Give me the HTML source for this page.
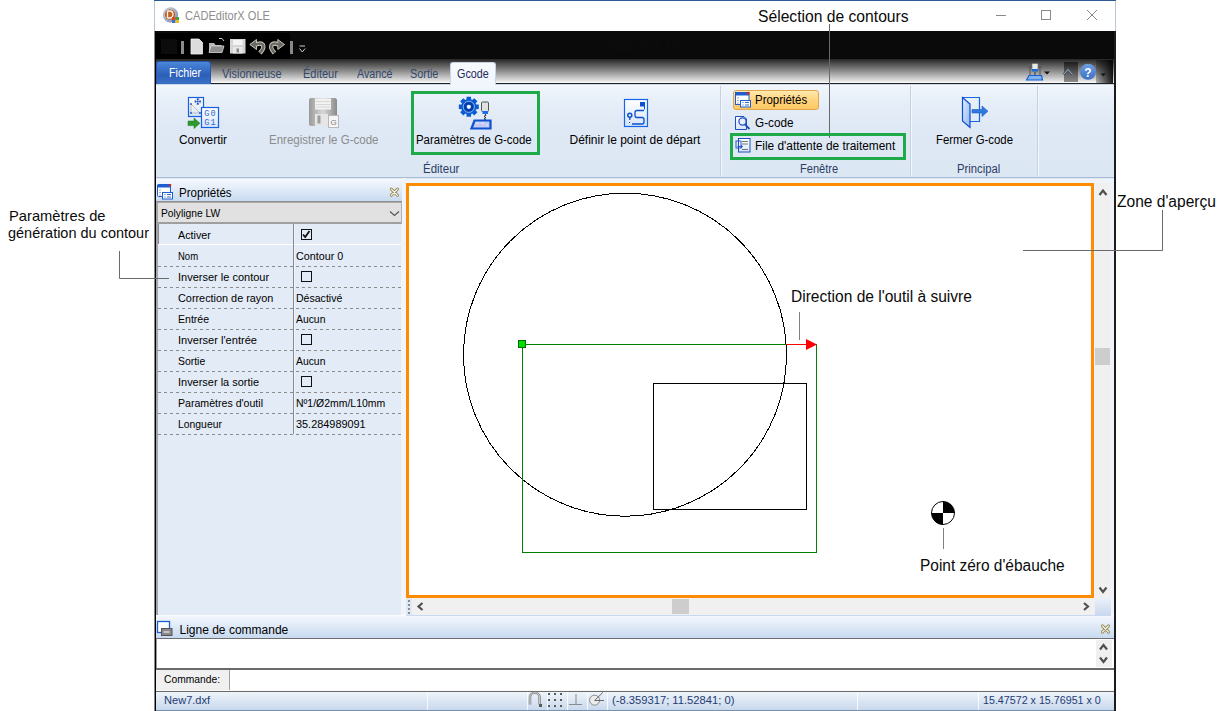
<!DOCTYPE html>
<html><head><meta charset="utf-8"><style>
html,body{margin:0;padding:0;}
body{width:1219px;height:711px;position:relative;overflow:hidden;background:#fff;font-family:"Liberation Sans",sans-serif;}
.t{position:absolute;white-space:nowrap;transform-origin:0 0;}
.r{position:absolute;}
</style></head><body>
<div class="r" style="left:154px;top:0px;width:962px;height:711px;background:#fff"></div>
<div class="r" style="left:154px;top:0px;width:962px;height:1px;background:#2b5b92"></div>
<div class="r" style="left:154px;top:1px;width:1px;height:30px;background:#b9c6d6"></div>
<div class="r" style="left:1115px;top:1px;width:1px;height:30px;background:#b9c6d6"></div>
<div class="r" style="left:156px;top:31px;width:958px;height:28px;background:#0a0a0a"></div>
<div class="r" style="left:156px;top:33px;width:134px;height:26px;background:#000"></div>
<div class="r" style="left:161px;top:39px;width:16px;height:15px;background:#0c0c0c"></div>
<div class="r" style="left:156px;top:59px;width:958px;height:23px;background:linear-gradient(#262626,#ececec)"></div>
<div class="r" style="left:156px;top:82px;width:958px;height:1px;background:#fafafa"></div>
<div class="r" style="left:156px;top:83px;width:958px;height:1px;background:#1f1f1f"></div>
<div class="r" style="left:154px;top:31px;width:1px;height:680px;background:#8a8a8a"></div>
<div class="r" style="left:155px;top:31px;width:1px;height:680px;background:#000"></div>
<div class="r" style="left:1114px;top:31px;width:2px;height:680px;background:#1c1c1c"></div>
<div class="r" style="left:156px;top:84px;width:958px;height:93px;background:linear-gradient(#f3f7fd 0%,#e6eef8 20%,#dfe9f5 45%,#dce7f4 100%)"></div>
<div class="r" style="left:156px;top:84px;width:958px;height:1px;background:#c9d7e8"></div>
<div class="r" style="left:156px;top:177px;width:958px;height:1px;background:#a9bbd2"></div>
<div class="r" style="left:720px;top:86px;width:1px;height:90px;background:#c3d1e2"></div>
<div class="r" style="left:721px;top:86px;width:1px;height:90px;background:#f4f8fc"></div>
<div class="r" style="left:910px;top:86px;width:1px;height:90px;background:#c3d1e2"></div>
<div class="r" style="left:911px;top:86px;width:1px;height:90px;background:#f4f8fc"></div>
<div class="r" style="left:1037px;top:86px;width:1px;height:90px;background:#c3d1e2"></div>
<div class="r" style="left:1038px;top:86px;width:1px;height:90px;background:#f4f8fc"></div>
<div class="r" style="left:156px;top:178px;width:958px;height:437px;background:#eff4fa"></div>
<div class="r" style="left:156px;top:178px;width:958px;height:1px;background:#dfe8f4"></div>
<div class="r" style="left:156px;top:178px;width:247px;height:1px;background:#dfe8f4"></div>
<div class="r" style="left:156px;top:179px;width:247px;height:22px;background:linear-gradient(#f6f9fe,#c9dbf1)"></div>
<div class="r" style="left:156px;top:201px;width:246px;height:1px;background:#8f8f8f"></div>
<div class="r" style="left:156px;top:202px;width:246px;height:22px;background:#e1e1e1;border-top:1px solid #a9a9a9;box-sizing:border-box"></div>
<div class="r" style="left:156px;top:222px;width:246px;height:2px;background:#9f9f9f"></div>
<div class="r" style="left:401px;top:202px;width:1px;height:22px;background:#b0b0b0"></div>
<div class="r" style="left:156px;top:224px;width:245px;height:391px;background:#e2ebf6"></div>
<div class="r" style="left:156px;top:202px;width:2px;height:413px;background:#a6a6a6"></div>
<div class="r" style="left:158px;top:224px;width:1px;height:21px;background:#8a8a8a"></div>
<div class="r" style="left:158px;top:244px;width:243px;height:1px;background:#ffffff"></div>
<div class="r" style="left:158px;top:266px;width:243px;height:1px;background:repeating-linear-gradient(90deg,#8c8c8c 0 3px,transparent 3px 6px)"></div>
<div class="r" style="left:158px;top:287px;width:243px;height:1px;background:repeating-linear-gradient(90deg,#8c8c8c 0 3px,transparent 3px 6px)"></div>
<div class="r" style="left:158px;top:308px;width:243px;height:1px;background:repeating-linear-gradient(90deg,#8c8c8c 0 3px,transparent 3px 6px)"></div>
<div class="r" style="left:158px;top:329px;width:243px;height:1px;background:repeating-linear-gradient(90deg,#8c8c8c 0 3px,transparent 3px 6px)"></div>
<div class="r" style="left:158px;top:350px;width:243px;height:1px;background:repeating-linear-gradient(90deg,#8c8c8c 0 3px,transparent 3px 6px)"></div>
<div class="r" style="left:158px;top:371px;width:243px;height:1px;background:repeating-linear-gradient(90deg,#8c8c8c 0 3px,transparent 3px 6px)"></div>
<div class="r" style="left:158px;top:392px;width:243px;height:1px;background:repeating-linear-gradient(90deg,#8c8c8c 0 3px,transparent 3px 6px)"></div>
<div class="r" style="left:158px;top:413px;width:243px;height:1px;background:repeating-linear-gradient(90deg,#8c8c8c 0 3px,transparent 3px 6px)"></div>
<div class="r" style="left:158px;top:434px;width:243px;height:1px;background:repeating-linear-gradient(90deg,#8c8c8c 0 3px,transparent 3px 6px)"></div>
<div class="r" style="left:293px;top:224px;width:1px;height:210px;background:#8a8a8a"></div>
<div class="r" style="left:294px;top:224px;width:1px;height:210px;background:#eef3fa"></div>
<div class="r" style="left:402px;top:178px;width:4px;height:437px;background:#f1f5fb"></div>
<div class="r" style="left:406px;top:183px;width:688px;height:415px;background:#fff;border:3px solid #ff8c00;box-sizing:border-box"></div>
<div class="r" style="left:1095px;top:183px;width:16px;height:415px;background:#f0f0f0"></div>
<div class="r" style="left:412px;top:598px;width:683px;height:17px;background:#f0f0f0"></div>
<div class="r" style="left:406px;top:598px;width:6px;height:17px;background:#dfe8f4"></div>
<div class="r" style="left:1095px;top:598px;width:16px;height:17px;background:linear-gradient(#eaf1fa,#c9d9ee)"></div>
<div class="r" style="left:156px;top:615px;width:958px;height:1px;background:#fafcff"></div>
<div class="r" style="left:156px;top:616px;width:958px;height:22px;background:linear-gradient(#f3f7fd,#c8daf0)"></div>
<div class="r" style="left:156px;top:638px;width:958px;height:1px;background:#6f6f6f"></div>
<div class="r" style="left:156px;top:639px;width:958px;height:29px;background:#fff"></div>
<div class="r" style="left:156px;top:639px;width:1px;height:29px;background:#9a9a9a"></div>
<div class="r" style="left:1096px;top:640px;width:16px;height:27px;background:#f0f0f0"></div>
<div class="r" style="left:156px;top:668px;width:958px;height:2px;background:#6a6a6a"></div>
<div class="r" style="left:156px;top:670px;width:958px;height:21px;background:#fff"></div>
<div class="r" style="left:156px;top:670px;width:73px;height:21px;background:#f0f0f0"></div>
<div class="r" style="left:229px;top:670px;width:1px;height:21px;background:#a0a0a0"></div>
<div class="r" style="left:156px;top:690px;width:958px;height:1px;background:#faf8f5"></div>
<div class="r" style="left:156px;top:691px;width:958px;height:1px;background:#6a6a6a"></div>
<div class="r" style="left:156px;top:692px;width:958px;height:18px;background:linear-gradient(#eef4fb,#c8d8ec)"></div>
<div class="r" style="left:156px;top:710px;width:958px;height:1px;background:#7a8fa8"></div>
<div class="r" style="left:427px;top:692px;width:1px;height:18px;background:#ffffff;opacity:.8"></div>
<div class="r" style="left:527px;top:692px;width:1px;height:18px;background:#ffffff;opacity:.8"></div>
<div class="r" style="left:547px;top:692px;width:1px;height:18px;background:#ffffff;opacity:.8"></div>
<div class="r" style="left:567px;top:692px;width:1px;height:18px;background:#ffffff;opacity:.8"></div>
<div class="r" style="left:587px;top:692px;width:1px;height:18px;background:#ffffff;opacity:.8"></div>
<div class="r" style="left:607px;top:692px;width:1px;height:18px;background:#ffffff;opacity:.8"></div>
<div class="r" style="left:857px;top:692px;width:1px;height:18px;background:#ffffff;opacity:.8"></div>
<div class="r" style="left:978px;top:692px;width:1px;height:18px;background:#ffffff;opacity:.8"></div>
<div class="r" style="left:1064px;top:62px;width:14px;height:20px;background:linear-gradient(#1c1c1c,#8c8c8c)"></div>
<div class="r" style="left:1096px;top:60px;width:17px;height:23px;background:linear-gradient(90deg,rgba(0,0,0,.25),rgba(0,0,0,.9))"></div>
<div class="r" style="left:156px;top:61px;width:55px;height:23px;background:linear-gradient(#4a86da,#2c5fb8 60%,#3a72c8);border:1px solid #2a55a8;border-bottom:none;border-radius:3px 3px 0 0;box-sizing:border-box"></div>
<div class="r" style="left:450px;top:62px;width:46px;height:23px;background:linear-gradient(#f6f9fe,#f2f6fc);border:1px solid #c5d3e6;border-bottom:none;border-radius:3px 3px 0 0;box-sizing:border-box"></div>
<div class="r" style="left:733px;top:90px;width:86px;height:20px;background:linear-gradient(#ffe9ae,#ffd47e 50%,#ffc862);border:1px solid #dfa64e;border-radius:3px;box-sizing:border-box"></div>
<div class="t" style="left:184.60px;top:10px;font-size:12px;line-height:12px;color:#8d8d8d;transform:scaleX(0.9233);">CADEditorX OLE</div>
<div class="t" style="left:168.70px;top:67px;font-size:12px;line-height:12px;color:#fff;transform:scaleX(0.8889);">Fichier</div>
<div class="t" style="left:222.40px;top:68px;font-size:12px;line-height:12px;color:#33476b;transform:scaleX(0.9143);">Visionneuse</div>
<div class="t" style="left:302.50px;top:68px;font-size:12px;line-height:12px;color:#33476b;transform:scaleX(0.9184);">Éditeur</div>
<div class="t" style="left:356.50px;top:68px;font-size:12px;line-height:12px;color:#33476b;transform:scaleX(0.8917);">Avancé</div>
<div class="t" style="left:410.00px;top:68px;font-size:12px;line-height:12px;color:#33476b;transform:scaleX(0.9052);">Sortie</div>
<div class="t" style="left:456.70px;top:68px;font-size:12px;line-height:12px;color:#1e2a5a;transform:scaleX(0.8989);">Gcode</div>
<div class="t" style="left:179.00px;top:134px;font-size:12px;line-height:12px;color:#000000;transform:scaleX(0.9859);">Convertir</div>
<div class="t" style="left:268.50px;top:134px;font-size:12px;line-height:12px;color:#8c8c8c;transform:scaleX(0.9600);">Enregistrer le G-code</div>
<div class="t" style="left:416.40px;top:134px;font-size:12px;line-height:12px;color:#000000;transform:scaleX(0.9524);">Paramètres de G-code</div>
<div class="t" style="left:569.50px;top:134px;font-size:12px;line-height:12px;color:#000000;">Définir le point de départ</div>
<div class="t" style="left:936.00px;top:134px;font-size:12px;line-height:12px;color:#000000;transform:scaleX(0.9462);">Fermer G-code</div>
<div class="t" style="left:754.50px;top:94px;font-size:12px;line-height:12px;color:#000000;transform:scaleX(0.9527);">Propriétés</div>
<div class="t" style="left:754.50px;top:117px;font-size:12px;line-height:12px;color:#000000;transform:scaleX(0.9778);">G-code</div>
<div class="t" style="left:754.50px;top:140px;font-size:12px;line-height:12px;color:#000000;transform:scaleX(0.9895);">File d'attente de traitement</div>
<div class="t" style="left:423.40px;top:163px;font-size:12px;line-height:12px;color:#2c3d63;transform:scaleX(0.9579);">Éditeur</div>
<div class="t" style="left:800.40px;top:163px;font-size:12px;line-height:12px;color:#2c3d63;transform:scaleX(0.9208);">Fenêtre</div>
<div class="t" style="left:956.50px;top:163px;font-size:12px;line-height:12px;color:#2c3d63;transform:scaleX(0.9391);">Principal</div>
<div class="t" style="left:179.00px;top:187px;font-size:12px;line-height:12px;color:#000000;transform:scaleX(0.9618);">Propriétés</div>
<div class="t" style="left:160.60px;top:208px;font-size:11px;line-height:11px;color:#000000;transform:scaleX(0.9341);">Polyligne LW</div>
<div class="t" style="left:178.00px;top:230px;font-size:11px;line-height:11px;color:#000000;transform:scaleX(0.9755);">Activer</div>
<div class="r" style="left:301px;top:229px;width:11px;height:11px;border:1px solid #111;box-sizing:border-box"></div>
<div class="t" style="left:178.00px;top:251px;font-size:11px;line-height:11px;color:#000000;transform:scaleX(0.8645);">Nom</div>
<div class="t" style="left:296.00px;top:251px;font-size:11px;line-height:11px;color:#000000;transform:scaleX(0.9770);">Contour 0</div>
<div class="t" style="left:178.00px;top:272px;font-size:11px;line-height:11px;color:#000000;">Inverser le contour</div>
<div class="r" style="left:301px;top:271px;width:11px;height:11px;border:1px solid #111;box-sizing:border-box"></div>
<div class="t" style="left:178.00px;top:293px;font-size:11px;line-height:11px;color:#000000;transform:scaleX(0.9873);">Correction de rayon</div>
<div class="t" style="left:296.00px;top:293px;font-size:11px;line-height:11px;color:#000000;transform:scaleX(0.9583);">Désactivé</div>
<div class="t" style="left:178.00px;top:314px;font-size:11px;line-height:11px;color:#000000;transform:scaleX(0.9588);">Entrée</div>
<div class="t" style="left:296.00px;top:314px;font-size:11px;line-height:11px;color:#000000;transform:scaleX(0.9427);">Aucun</div>
<div class="t" style="left:178.00px;top:335px;font-size:11px;line-height:11px;color:#000000;transform:scaleX(1.0056);">Inverser l'entrée</div>
<div class="r" style="left:301px;top:334px;width:11px;height:11px;border:1px solid #111;box-sizing:border-box"></div>
<div class="t" style="left:178.00px;top:356px;font-size:11px;line-height:11px;color:#000000;transform:scaleX(0.9461);">Sortie</div>
<div class="t" style="left:296.00px;top:356px;font-size:11px;line-height:11px;color:#000000;transform:scaleX(0.9427);">Aucun</div>
<div class="t" style="left:178.00px;top:377px;font-size:11px;line-height:11px;color:#000000;transform:scaleX(0.9962);">Inverser la sortie</div>
<div class="r" style="left:301px;top:376px;width:11px;height:11px;border:1px solid #111;box-sizing:border-box"></div>
<div class="t" style="left:178.00px;top:398px;font-size:11px;line-height:11px;color:#000000;transform:scaleX(0.9625);">Paramètres d'outil</div>
<div class="t" style="left:296.00px;top:398px;font-size:11px;line-height:11px;color:#000000;transform:scaleX(0.9502);">Nº1/Ø2mm/L10mm</div>
<div class="t" style="left:178.00px;top:419px;font-size:11px;line-height:11px;color:#000000;transform:scaleX(0.9441);">Longueur</div>
<div class="t" style="left:296.00px;top:419px;font-size:11px;line-height:11px;color:#000000;transform:scaleX(0.9904);">35.284989091</div>
<div class="t" style="left:179.50px;top:624px;font-size:12px;line-height:12px;color:#000000;">Ligne de commande</div>
<div class="t" style="left:163.60px;top:674px;font-size:11px;line-height:11px;color:#000000;transform:scaleX(0.9360);">Commande:</div>
<div class="t" style="left:163.60px;top:695px;font-size:11px;line-height:11px;color:#1f3b73;transform:scaleX(1.0057);">New7.dxf</div>
<div class="t" style="left:612.00px;top:695px;font-size:11px;line-height:11px;color:#1f3b73;transform:scaleX(1.0174);">(-8.359317; 11.52841; 0)</div>
<div class="t" style="left:983.20px;top:695px;font-size:11px;line-height:11px;color:#1f3b73;transform:scaleX(0.9725);">15.47572 x 15.76951 x 0</div>
<div class="t" style="left:597.00px;top:40px;font-size:12px;line-height:12px;color:#0d0d0d;">CADEditorX 15</div>
<div class="t" style="left:758.40px;top:9px;font-size:16px;line-height:16px;color:#0a0a0a;transform:scaleX(0.9787);">Sélection de contours</div>
<div class="t" style="left:8.50px;top:208px;font-size:15px;line-height:15px;color:#0a0a0a;transform:scaleX(0.9809);">Paramètres de</div>
<div class="t" style="left:8.00px;top:225px;font-size:15px;line-height:15px;color:#0a0a0a;transform:scaleX(0.9662);">génération du contour</div>
<div class="t" style="left:1117.40px;top:194px;font-size:16px;line-height:16px;color:#0a0a0a;transform:scaleX(0.9714);">Zone d'aperçu</div>
<div class="t" style="left:790.90px;top:289px;font-size:16px;line-height:16px;color:#0a0a0a;transform:scaleX(0.9713);">Direction de l'outil à suivre</div>
<div class="t" style="left:920.00px;top:558px;font-size:16px;line-height:16px;color:#0a0a0a;transform:scaleX(0.9652);">Point zéro d'ébauche</div>
<svg class="r" style="left:0px;top:0px" width="1219" height="711" viewBox="0 0 1219 711"><circle cx="625" cy="354.7" r="161.5" fill="none" stroke="#000" stroke-width="1" shape-rendering="crispEdges"/><rect x="522.5" y="344.5" width="294" height="208" fill="none" stroke="#008000" stroke-width="1"/><rect x="653.5" y="383.5" width="153" height="126" fill="none" stroke="#000" stroke-width="1"/><rect x="518.5" y="340.5" width="7" height="7" fill="#00e000" stroke="#007000" stroke-width="1"/><line x1="786" y1="344.5" x2="807" y2="344.5" stroke="#ff0000" stroke-width="1"/><path d="M806 339 L817 344.5 L806 350 Z" fill="#ff0000"/><line x1="799.5" y1="312" x2="799.5" y2="340" stroke="#808080" stroke-width="1"/><circle cx="943" cy="513" r="11.5" fill="#fff" stroke="#000" stroke-width="1"/><path d="M943 513 L943 501.5 A11.5 11.5 0 0 1 954.5 513 Z" fill="#000"/><path d="M943 513 L943 524.5 A11.5 11.5 0 0 1 931.5 513 Z" fill="#000"/><line x1="943.5" y1="528" x2="943.5" y2="549" stroke="#808080" stroke-width="1"/><line x1="829.5" y1="24" x2="829.5" y2="138" stroke="#6a6a6a" stroke-width="1"/><polyline points="119.5,251 119.5,278.5 169,278.5" fill="none" stroke="#6a6a6a" stroke-width="1"/><polyline points="1162.5,210 1162.5,250.5 1023,250.5" fill="none" stroke="#6a6a6a" stroke-width="1"/></svg>
<svg class="r" style="left:0px;top:0px" width="1219" height="711" viewBox="0 0 1219 711"><defs><radialGradient id="tig" cx="40%" cy="40%" r="60%"><stop offset="0" stop-color="#ffffff"/><stop offset="1" stop-color="#7f93b5"/></radialGradient><linearGradient id="blueTab" x1="0" y1="0" x2="0" y2="1"><stop offset="0" stop-color="#5593e3"/><stop offset="1" stop-color="#2859b5"/></linearGradient><linearGradient id="orangeBtn" x1="0" y1="0" x2="0" y2="1"><stop offset="0" stop-color="#ffe7a8"/><stop offset=".5" stop-color="#ffd27a"/><stop offset="1" stop-color="#ffc65a"/></linearGradient><linearGradient id="grayDisk" x1="0" y1="0" x2="1" y2="0"><stop offset="0" stop-color="#9a9a9a"/><stop offset=".5" stop-color="#d8d8d8"/><stop offset="1" stop-color="#8a8a8a"/></linearGradient><linearGradient id="lb" x1="0" y1="0" x2="0" y2="1"><stop offset="0" stop-color="#ffffff"/><stop offset="1" stop-color="#d7e4f7"/></linearGradient><linearGradient id="door" x1="0" y1="0" x2="1" y2="1"><stop offset="0" stop-color="#e6efff"/><stop offset="1" stop-color="#8fb4ef"/></linearGradient><linearGradient id="help" x1="0" y1="0" x2="0" y2="1"><stop offset="0" stop-color="#6d9ee6"/><stop offset="1" stop-color="#3d6fc4"/></linearGradient></defs><circle cx="170.5" cy="14.8" r="7.6" fill="url(#tig)"/><circle cx="170" cy="14.5" r="5.2" fill="#c2621f"/><path d="M167.5 11 v7 M167.5 11 h2.5 a3 3.5 0 0 1 0 7 h-2.5" fill="none" stroke="#f4f4f4" stroke-width="1.3"/><rect x="172" y="17" width="3.5" height="3" fill="#e8402a"/><rect x="175.5" y="17" width="3.5" height="3" fill="#3ea33a"/><rect x="172" y="20" width="3.5" height="3" fill="#3d6fd0"/><rect x="175.5" y="20" width="3.5" height="3" fill="#f0c020"/><line x1="996" y1="15.5" x2="1006" y2="15.5" stroke="#8a8a8a" stroke-width="1"/><rect x="1041.5" y="10.5" width="9" height="9" fill="none" stroke="#8a8a8a" stroke-width="1"/><path d="M1087 10 L1097 20 M1097 10 L1087 20" stroke="#8a8a8a" stroke-width="1"/><rect x="181" y="41" width="3" height="13" fill="#8a8a8a"/><path d="M191 39 h8 l3.5 3.5 V54 H191 Z" fill="#dcdcdc" stroke="#f0f0f0" stroke-width=".8"/><path d="M209 43 h5 l1.5 2 h6 v7 h-12.5 Z" fill="#b8b8b8"/><path d="M211 46 h13 l-2 6.5 h-13 Z" fill="#8e8e8e" stroke="#d8d8d8" stroke-width=".8"/><path d="M219 38.5 h3 l2 2.5" fill="none" stroke="#cfcfcf" stroke-width="1"/><rect x="230" y="39" width="15.5" height="14.5" fill="#d6d6d6"/><rect x="233" y="40" width="9.5" height="5" fill="#f4f4f4"/><rect x="233" y="47" width="9.5" height="6.5" fill="#e8e8e8"/><rect x="236.5" y="48.5" width="2.5" height="4" fill="#888"/><path d="M255 45 C262 41.5 267 45 260 53" fill="none" stroke="#d8d0b8" stroke-width="4.4"/><path d="M249.8 44.5 L256.5 39.5 L256.5 49.5 Z" fill="#6a6a6a" stroke="#d8d0b8" stroke-width=".9"/><path d="M255 45 C262 41.5 267 45 260 53" fill="none" stroke="#6a6a6a" stroke-width="2.6"/><path d="M279.5 45 C272.5 41.5 267.5 45 274.5 53" fill="none" stroke="#d8d0b8" stroke-width="4.4"/><path d="M284.5 44.5 L277.8 39.5 L277.8 49.5 Z" fill="#6a6a6a" stroke="#d8d0b8" stroke-width=".9"/><path d="M279.5 45 C272.5 41.5 267.5 45 274.5 53" fill="none" stroke="#6a6a6a" stroke-width="2.6"/><rect x="290" y="41" width="3" height="13" fill="#8a8a8a"/><path d="M299.5 46 h5.5 M299.5 48.5 l2.8 3.5 l2.8 -3.5" fill="none" stroke="#c8c8c8" stroke-width="1"/><path d="M1028 67 h14 M1030 67 v9 M1040 67 v9" stroke="#555" stroke-width="1" fill="none"/><rect x="1032" y="63.5" width="6" height="6" fill="#e8e8e8" stroke="#666" stroke-width=".6"/><rect x="1032" y="69" width="6" height="2.5" fill="#1b6ad8"/><path d="M1035 72 v5" stroke="#333" stroke-width="1"/><path d="M1026.5 80 L1029 75.5 H1041.5 L1042.5 80 Z" fill="#7fb2ee" stroke="#1a5fcf" stroke-width="1.2"/><path d="M1044 71.5 h6 l-3 3 Z" fill="#111"/><path d="M1063.5 74.5 l4.5 -5 l4.5 5" fill="none" stroke="#4c5666" stroke-width="2.6"/><path d="M1063.5 74.5 l4.5 -5 l4.5 5" fill="none" stroke="#9aa0a8" stroke-width="1"/><circle cx="1088" cy="71.8" r="8" fill="url(#help)"/><text x="1088" y="76.5" text-anchor="middle" font-family="Liberation Sans" font-weight="bold" font-size="12" fill="#fff">?</text><path d="M1100.5 73.5 h5.5 l-2.75 2.75 Z" fill="#111"/><rect x="412.5" y="92.5" width="126" height="61" fill="none" stroke="#1faa4a" stroke-width="3"/><rect x="731.5" y="134.5" width="173" height="24" fill="none" stroke="#1faa4a" stroke-width="3"/><rect x="188.5" y="97.5" width="15" height="19" fill="url(#lb)" stroke="#1560e0" stroke-width="1.2"/><path d="M191 104 V113 H200 Z" fill="none" stroke="#b0b0b0" stroke-width=".8"/><circle cx="191" cy="104" r=".9" fill="#1a4fc0"/><circle cx="191" cy="113" r=".9" fill="#1a4fc0"/><circle cx="200" cy="113" r=".9" fill="#1a4fc0"/><circle cx="197.8" cy="101.5" r="3.2" fill="#eef2f8" stroke="#a0a8b8" stroke-width=".8" stroke-dasharray="1 1"/><circle cx="197.8" cy="99.3" r="1" fill="#1a4fc0"/><circle cx="197.8" cy="103.7" r="1" fill="#1a4fc0"/><circle cx="195.6" cy="101.5" r="1" fill="#1a4fc0"/><circle cx="200" cy="101.5" r="1" fill="#1a4fc0"/><circle cx="197.8" cy="101.5" r="1" fill="#1a4fc0"/><rect x="201.5" y="107.5" width="17" height="20" fill="url(#lb)" stroke="#1560e0" stroke-width="1.2"/><text x="204.2" y="116" font-family="Liberation Mono" font-size="8.6" fill="#2a6ad8" textLength="11.5">G0</text><text x="204.2" y="125" font-family="Liberation Mono" font-size="8.6" fill="#2a6ad8" textLength="11.5">G1</text><path d="M188 121 h6 v-3 l6 5.3 l-6 5.3 v-3 h-6 Z" fill="#2e9a2e" stroke="#1f7a1f" stroke-width=".5"/><path d="M311 98 H334.5 Q337 98 337 100.5 V126 H311 Q309 126 309 124 V100 Q309 98 311 98 Z" fill="url(#grayDisk)"/><rect x="315" y="98.5" width="16" height="11" fill="#f2f2f2"/><path d="M315.5 101.5 h15 M315.5 104.5 h15 M315.5 107 h15" stroke="#cfcfcf" stroke-width=".8"/><rect x="315" y="114" width="13" height="12" fill="#e6e6e6"/><rect x="317.5" y="115.5" width="3" height="8" fill="#9c9c9c"/><rect x="328.5" y="115.5" width="10" height="12" fill="#f6f6f6" stroke="#b8b8b8" stroke-width="1"/><text x="333.5" y="125" text-anchor="middle" font-family="Liberation Sans" font-size="8" fill="#7a7a7a">G</text><path d="M478.75 104.57 L478.75 109.03 L476.01 109.19 L475.59 110.21 L477.41 112.26 L474.26 115.41 L472.21 113.59 L471.19 114.01 L471.03 116.75 L466.57 116.75 L466.41 114.01 L465.39 113.59 L463.34 115.41 L460.19 112.26 L462.01 110.21 L461.59 109.19 L458.85 109.03 L458.85 104.57 L461.59 104.41 L462.01 103.39 L460.19 101.34 L463.34 98.19 L465.39 100.01 L466.41 99.59 L466.57 96.85 L471.03 96.85 L471.19 99.59 L472.21 100.01 L474.26 98.19 L477.41 101.34 L475.59 103.39 L476.01 104.41 Z" fill="#0a5bd4"/><circle cx="468.8" cy="106.8" r="5.6" fill="#0040b0" stroke="#cfe0ff" stroke-width=".7"/><circle cx="468.8" cy="106.8" r="2.1" fill="#fff"/><rect x="481.5" y="102" width="7" height="9.5" rx="1" fill="#e0e0e0" stroke="#555" stroke-width="1"/><rect x="482.5" y="111" width="5.5" height="3" fill="#1a70e8"/><path d="M485 114 l1 1.2 l-2 1.2 l2 1.2 l-2 1.2 l2 1.2 l-2 1.2 l2 1.2 l-1 1.2" fill="none" stroke="#222" stroke-width=".9"/><path d="M471.5 128.5 L474.5 120.5 H490.5 V128.5 Z" fill="#c4c8f4" stroke="#0a52d0" stroke-width="2.2"/><path d="M476 123 h3 M481 123 h3 M486 125 h2" stroke="#e8ecff" stroke-width="1"/><rect x="624.5" y="99.5" width="23" height="27" fill="url(#lb)" stroke="#1466e6" stroke-width="1.2"/><rect x="640" y="102" width="5" height="4.5" fill="#0a50d0"/><path d="M644.5 106 v3.5" stroke="#0a50d0" stroke-width="1"/><path d="M644 110.5 h-7 q-2 0 -2 2 v3 q0 2 2 2 h5 q2 0 2 2 v2.5 q0 2 -2 2 h-10" fill="none" stroke="#0a50d0" stroke-width="1.3"/><circle cx="629.8" cy="115.3" r="2" fill="none" stroke="#0a50d0" stroke-width="1.5"/><path d="M629.8 117.5 v2.5" stroke="#0a50d0" stroke-width="1.3"/><path d="M629 122.5 h1" stroke="#0a50d0" stroke-width="1"/><path d="M962.5 97.5 H979.5 V121.5 H970" fill="none" stroke="#1466e6" stroke-width="1.2"/><path d="M962.5 97.5 L970 104 V127.5 L962.5 121 Z" fill="url(#door)" stroke="#0a4fd0" stroke-width="1.2"/><path d="M972 109.5 H982 V106 L988 111.2 L982 116.5 V113 H972 Z" fill="#2f78dc" stroke="#1a5cc4" stroke-width=".6"/><rect x="735.5" y="92.5" width="13.5" height="12" fill="#fff" stroke="#1d5fd0" stroke-width="1"/><rect x="735.5" y="92.5" width="13.5" height="3" fill="#1d5fd0"/><rect x="747" y="92" width="2.5" height="2.5" fill="#e02020"/><path d="M737.5 98 h1 M737.5 100.5 h1 M737.5 103 h1" stroke="#1d5fd0" stroke-width="1"/><rect x="740.5" y="100.5" width="10" height="6.5" fill="#fff" stroke="#1d5fd0" stroke-width="1"/><path d="M742.5 102.5 h1 M745 102.5 h4 M742.5 105 h1 M745 105 h4" stroke="#1d5fd0" stroke-width=".9"/><path d="M735.5 116.5 H744 L746.5 119 V129.5 H735.5 Z" fill="url(#lb)" stroke="#1d4fc0" stroke-width="1"/><circle cx="742.5" cy="121.5" r="3.6" fill="#e8f0ff" stroke="#1d4fc0" stroke-width="1.2"/><path d="M745 124.5 L749.5 129" stroke="#1d4fc0" stroke-width="1.8"/><rect x="738.5" y="138.5" width="11.5" height="13.5" fill="url(#lb)" stroke="#1d4fc0" stroke-width="1"/><rect x="736" y="141" width="5" height="7" fill="none" stroke="#1d4fc0" stroke-width=".9"/><path d="M742 141.5 h6 M742 144 h6 M742 149.5 h6" stroke="#555" stroke-width=".8"/><path d="M737.5 146.5 h5 l-1.5 -1.5 M742.5 146.5 l-1.5 1.5" stroke="#1d4fc0" stroke-width=".9" fill="none"/><rect x="157.5" y="184.5" width="13" height="12" rx="1" fill="#fff" stroke="#1d5fd0" stroke-width="1"/><rect x="157.5" y="184.5" width="13" height="3" fill="#1d5fd0"/><rect x="169" y="184" width="2.2" height="2.2" fill="#e02020"/><path d="M159.5 190 h1 M159.5 192.5 h1 M159.5 195 h1" stroke="#1d5fd0" stroke-width="1"/><rect x="162.5" y="192.5" width="10" height="6.5" fill="#fff" stroke="#1d5fd0" stroke-width="1"/><path d="M164.5 194.5 h1 M167 194.5 h4 M164.5 197 h1 M167 197 h4" stroke="#1d5fd0" stroke-width=".9"/><rect x="157.5" y="621.5" width="12" height="11" fill="#fff" stroke="#1d5fd0" stroke-width="1.3"/><rect x="161.5" y="628.5" width="10.5" height="7" fill="#8a8a8a" stroke="#555" stroke-width="1"/><path d="M163.5 632 h6" stroke="#fff" stroke-width="1"/><path d="M391.29999999999995 189.1 L397.5 195.29999999999998 M397.5 189.1 L391.29999999999995 195.29999999999998" stroke="#9a8c55" stroke-width="3.0" stroke-linecap="round"/><path d="M391.29999999999995 189.1 L397.5 195.29999999999998 M397.5 189.1 L391.29999999999995 195.29999999999998" stroke="#fbfbf6" stroke-width="1.2" stroke-linecap="round"/><path d="M1102.4 625.9 L1108.6 632.1 M1108.6 625.9 L1102.4 632.1" stroke="#9a8c55" stroke-width="3.0" stroke-linecap="round"/><path d="M1102.4 625.9 L1108.6 632.1 M1108.6 625.9 L1102.4 632.1" stroke="#fbfbf6" stroke-width="1.2" stroke-linecap="round"/><path d="M390 211.5 l4.5 4 l4.5 -4" fill="none" stroke="#555" stroke-width="1.2"/><path d="M303 234.5 l2.2 2.5 l4.3 -6" fill="none" stroke="#111" stroke-width="1.8"/><polyline points="1099.5,195 1103,190.5 1106.5,195" fill="none" stroke="#505050" stroke-width="2.2"/><polyline points="1099.5,587.5 1103,592 1106.5,587.5" fill="none" stroke="#505050" stroke-width="2.2"/><rect x="1095" y="348" width="15" height="17" fill="#cdcdcd"/><polyline points="422.5,603 418.5,606.5 422.5,610" fill="none" stroke="#505050" stroke-width="2.2"/><polyline points="1084,603 1088,606.5 1084,610" fill="none" stroke="#505050" stroke-width="2.2"/><rect x="672" y="599" width="17" height="15" fill="#cdcdcd"/><rect x="408" y="600" width="2" height="2" fill="#8c8c8c"/><rect x="408" y="604" width="2" height="2" fill="#8c8c8c"/><rect x="408" y="608" width="2" height="2" fill="#8c8c8c"/><rect x="408" y="612" width="2" height="2" fill="#8c8c8c"/><line x1="406" y1="615.5" x2="1111" y2="615.5" stroke="#c9daf0" stroke-width="1"/><polyline points="1100,649.5 1103.5,645 1107,649.5" fill="none" stroke="#505050" stroke-width="2.2"/><polyline points="1100,657.5 1103.5,662 1107,657.5" fill="none" stroke="#505050" stroke-width="2.2"/><path d="M530 704.5 V697.5 a4.8 4.8 0 0 1 9.6 0 V704.5" fill="none" stroke="#8a8a8a" stroke-width="2.6"/><path d="M530 704.5 V697.5 a4.8 4.8 0 0 1 9.6 0 V704.5" fill="none" stroke="#d8d8d8" stroke-width=".9"/><rect x="539" y="704" width="3" height="3" fill="#5a5a5a"/><rect x="548" y="693" width="2" height="2" fill="#5a5a5a"/><rect x="548" y="699" width="2" height="2" fill="#5a5a5a"/><rect x="548" y="705" width="2" height="2" fill="#5a5a5a"/><rect x="554" y="693" width="2" height="2" fill="#5a5a5a"/><rect x="554" y="699" width="2" height="2" fill="#5a5a5a"/><rect x="554" y="705" width="2" height="2" fill="#5a5a5a"/><rect x="560" y="693" width="2" height="2" fill="#5a5a5a"/><rect x="560" y="699" width="2" height="2" fill="#5a5a5a"/><rect x="560" y="705" width="2" height="2" fill="#5a5a5a"/><path d="M576 694 V704.5 M569 704.5 H582" stroke="#8a8a8a" stroke-width="1"/><circle cx="594.6" cy="700.2" r="5" fill="#ececec" stroke="#8a8a8a" stroke-width="1"/><path d="M594.6 700.5 H604 M594.6 700.5 L603 692.3" stroke="#6a6a6a" stroke-width="1"/></svg>
</body></html>
